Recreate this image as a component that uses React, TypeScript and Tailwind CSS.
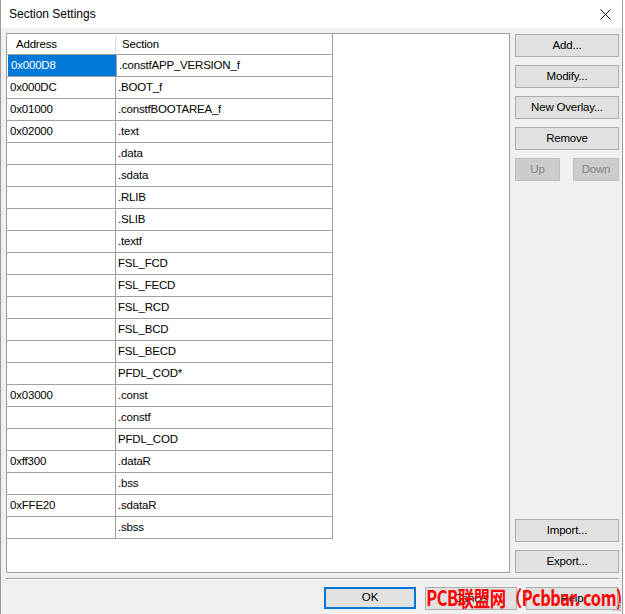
const ROWS: [string, string][] = [
    ["0x000D8", ".constfAPP_VERSION_f"],
    ["0x000DC", ".BOOT_f"],
    ["0x01000", ".constfBOOTAREA_f"],
    ["0x02000", ".text"],
    ["", ".data"],
    ["", ".sdata"],
    ["", ".RLIB"],
    ["", ".SLIB"],
    ["", ".textf"],
    ["", "FSL_FCD"],
    ["", "FSL_FECD"],
    ["", "FSL_RCD"],
    ["", "FSL_BCD"],
    ["", "FSL_BECD"],
    ["", "PFDL_COD*"],
    ["0x03000", ".const"],
    ["", ".constf"],
    ["", "PFDL_COD"],
    ["0xff300", ".dataR"],
    ["", ".bss"],
    ["0xFFE20", ".sdataR"],
    ["", ".sbss"],
];

const font = "[font-family:'Liberation_Sans',Arial,sans-serif]";

const WinButton = ({
    label,
    disabled,
    className = "",
}: {
    label: string;
    disabled?: boolean;
    className?: string;
}) => (
    <div
        className={`flex items-center justify-center h-[23px] border text-[11.5px] tracking-[-0.2px] ${
            disabled
                ? "bg-[#cccccc] border-[#bfbfbf] text-[#838383]"
                : "bg-[#e1e1e1] border-[#adadad] text-black"
        } ${className}`}
    >
        {label}
    </div>
);

export default function App() {
    return (
        <div className={`w-[625px] h-[614px] bg-white overflow-hidden ${font}`}>
            <div className="relative w-[623px] h-[614px] flex flex-col border-l border-r border-[#9a9a9a]">
                {/* title bar */}
                <div className="h-[28px] bg-white flex items-center justify-between pl-[8px] pr-[10px] shrink-0">
                    <span className="text-[12px] text-black">Section Settings</span>
                    <svg width="11" height="11" viewBox="0 0 11 11" className="mr-[1px]">
                        <path d="M0.5 0.5 L10.5 10.5 M10.5 0.5 L0.5 10.5" stroke="#111" strokeWidth="1" />
                    </svg>
                </div>

                <div className="flex-1 bg-[#f0f0f0] flex flex-col">
                    <div className="flex pt-[5px] pl-[5px]">
                        {/* list box */}
                        <div className="w-[504px] h-[540px] bg-white border border-[#a0a0a0]">
                            <div className="w-[326px] border-r border-[#a0a0a0]">
                                <div className="flex h-[21px] border-b border-[#a0a0a0] items-center pt-[2px] text-[11.5px] tracking-[-0.2px] text-black">
                                    <div className="w-[109px] h-full flex items-center pl-[9px] border-r border-[#dcdcdc]">
                                        Address
                                    </div>
                                    <div className="flex-1 pl-[6px]">Section</div>
                                </div>
                                {ROWS.map(([addr, sec], i) => (
                                    <div
                                        key={i}
                                        className="flex h-[22px] border-b border-[#a0a0a0] text-[11.5px] tracking-[-0.2px] text-black"
                                    >
                                        <div
                                            className={`w-[109px] h-full flex items-center pl-[3px] pt-[1px] border-r border-[#a0a0a0] ${
                                                i === 0 ? "bg-[#0078d7] text-white ml-[1px] w-[108px]" : ""
                                            }`}
                                        >
                                            {addr}
                                        </div>
                                        <div className="flex-1 flex items-center pl-[2px] pt-[1px]">{sec}</div>
                                    </div>
                                ))}
                            </div>
                        </div>

                        {/* buttons */}
                        <div className="w-[104px] ml-[5px] h-[540px] flex flex-col pt-[1px]">
                            <div className="flex flex-col gap-[8px]">
                                <WinButton label="Add..." />
                                <WinButton label="Modify..." />
                                <WinButton label="New Overlay..." />
                                <WinButton label="Remove" />
                                <div className="flex justify-between">
                                    <WinButton label="Up" disabled className="w-[45px]" />
                                    <WinButton label="Down" disabled className="w-[46px]" />
                                </div>
                            </div>
                            <div className="mt-auto flex flex-col gap-[8px]">
                                <WinButton label="Import..." />
                                <WinButton label="Export..." />
                            </div>
                        </div>
                    </div>

                    {/* separator */}
                    <div className="ml-[5px] mr-[3px] mt-[5px] border-t border-[#a0a0a0] border-b border-b-white h-[2px]" />

                    {/* bottom buttons */}
                    <div className="relative flex justify-end gap-[9px] pr-[4px] mt-[7px]">
                        <div className="w-[92px] h-[22px] flex items-center justify-center bg-[#e1e1e1] border-2 border-[#0078d7] text-[11.5px] text-black">
                            OK
                        </div>
                        <WinButton label="Cancel" className="w-[92px] h-[22px]" />
                        <WinButton label="Help" className="w-[92px] h-[22px]" />
                        <div className="absolute right-[0px] top-[-3px] text-[#ff0000] text-[21px] leading-[26px] font-bold tracking-[-0.5px] whitespace-nowrap [font-family:'Noto_Sans_CJK_SC',sans-serif] [transform:scaleX(0.78)] origin-right">
                            PCB联盟网（Pcbbar. com)
                        </div>
                    </div>

                    {/* resize grip */}
                    <div className="absolute right-[1px] bottom-[3px] grid grid-cols-3 gap-[1px]">
                        {[0, 1, 2, 3, 4, 5, 6, 7, 8].map((k) => (
                            <div
                                key={k}
                                className={`w-[2px] h-[2px] ${k === 0 || k === 1 || k === 3 ? "bg-transparent" : "bg-[#b8b8b8]"}`}
                            />
                        ))}
                    </div>
                </div>
            </div>
        </div>
    );
}
